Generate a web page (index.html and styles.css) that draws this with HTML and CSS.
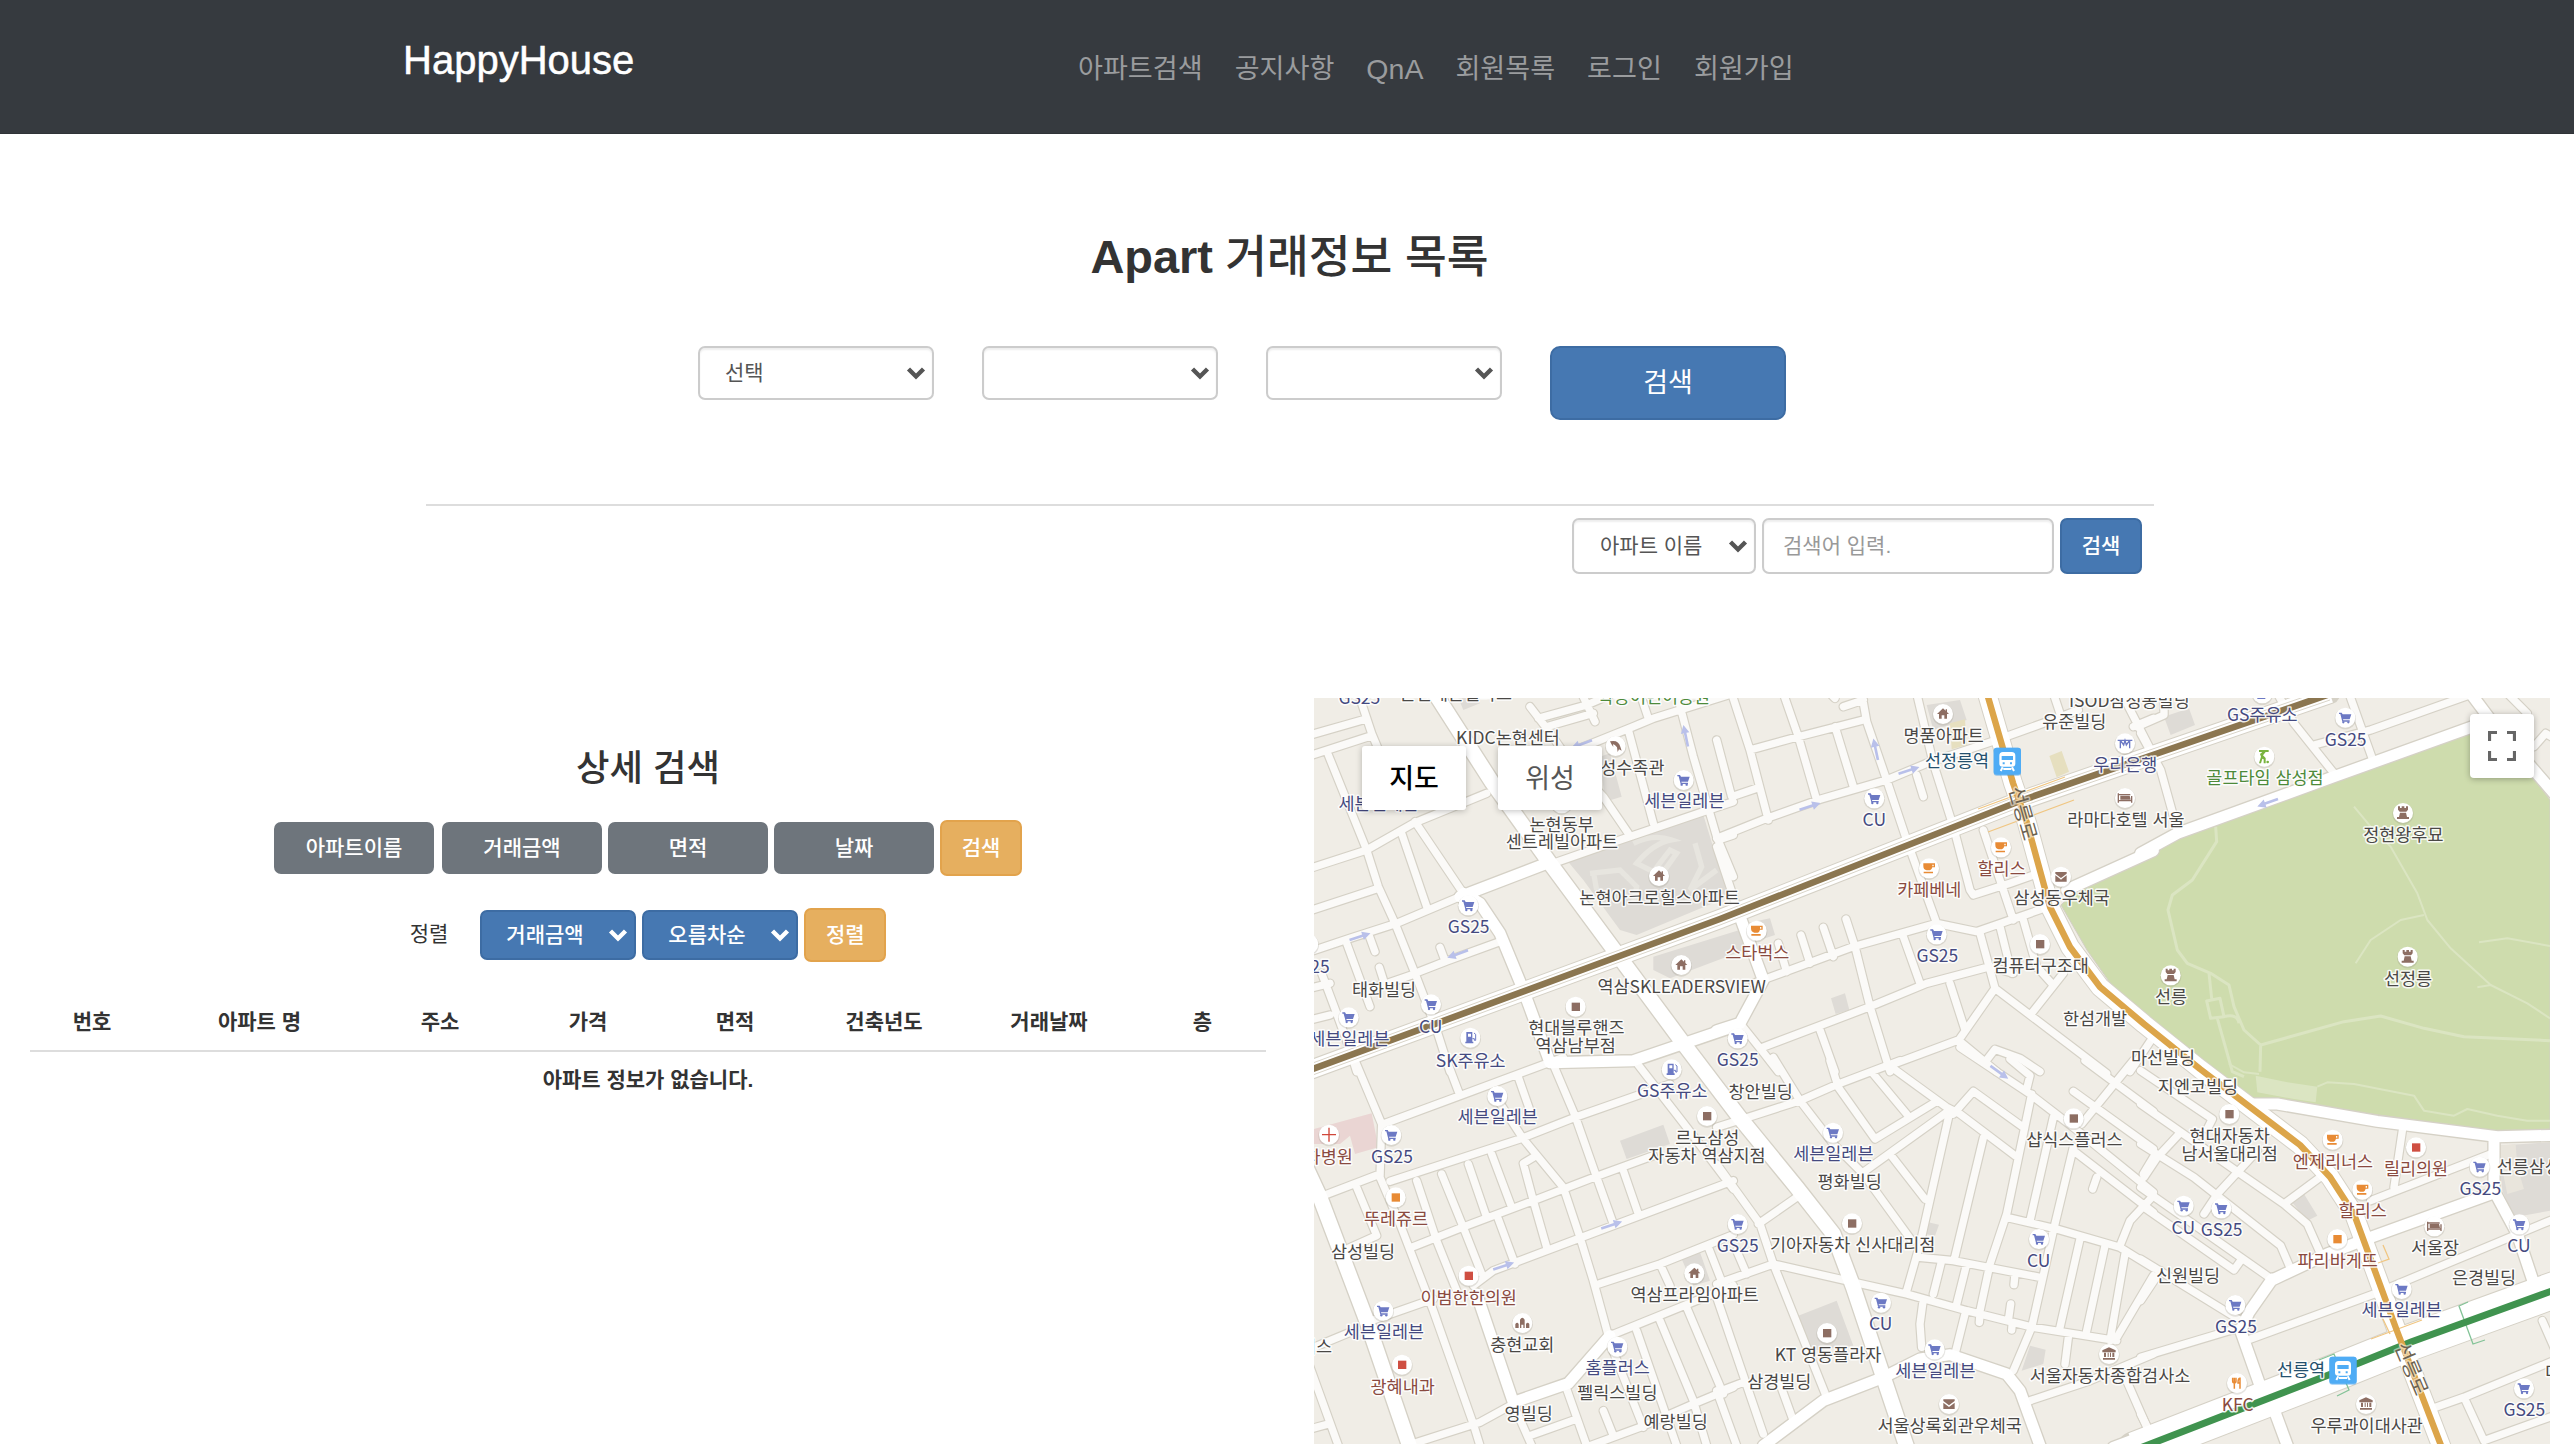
FILE: index.html
```html
<!DOCTYPE html>
<html lang="ko">
<head>
<meta charset="utf-8">
<title>HappyHouse</title>
<link rel="stylesheet" href="styles.css">
</head>
<body>
<svg class="defs" width="0" height="0" aria-hidden="true">
  <symbol id="chevron" viewBox="0 0 20 14"><path d="M2.5 3 L10 10.5 L17.5 3" fill="none" stroke="currentColor" stroke-width="4.4"/></symbol>
</svg>

<header class="topbar">
  <a class="brand">HappyHouse</a>
  <nav class="menu"><a>아파트검색</a><a>공지사항</a><a class="latin">QnA</a><a>회원목록</a><a>로그인</a><a>회원가입</a></nav>
</header>

<section class="search">
  <h1 class="title"><span class="latin">Apart</span> 거래정보 목록</h1>
  <div class="region">
    <div class="picker"><span>선택</span><svg class="chev"><use href="#chevron"/></svg></div>
    <div class="picker"><span></span><svg class="chev"><use href="#chevron"/></svg></div>
    <div class="picker"><span></span><svg class="chev"><use href="#chevron"/></svg></div>
    <button class="btn primary large">검색</button>
  </div>
  <div class="keyword">
    <div class="picker"><span>아파트 이름</span><svg class="chev"><use href="#chevron"/></svg></div>
    <input class="field" placeholder="검색어 입력.">
    <button class="btn primary">검색</button>
  </div>
</section>

<main class="content">
  <section class="list">
    <h2 class="subtitle">상세 검색</h2>
    <div class="filters">
      <button class="btn gray">아파트이름</button><button class="btn gray">거래금액</button><button class="btn gray">면적</button><button class="btn gray">날짜</button><button class="btn warn">검색</button>
    </div>
    <div class="sorting">
      <span class="sort-label">정렬</span>
      <div class="picker blue"><span>거래금액</span><svg class="chev"><use href="#chevron"/></svg></div>
      <div class="picker blue"><span>오름차순</span><svg class="chev"><use href="#chevron"/></svg></div>
      <button class="btn warn">정렬</button>
    </div>
    <table class="deals">
      <colgroup><col class="c1"><col class="c2"><col class="c3"><col class="c4"><col class="c5"><col class="c6"><col class="c7"><col class="c8"></colgroup>
      <thead><tr><th>번호</th><th>아파트 명</th><th>주소</th><th>가격</th><th>면적</th><th>건축년도</th><th>거래날짜</th><th>층</th></tr></thead>
      <tbody><tr><td colspan="8">아파트 정보가 없습니다.</td></tr></tbody>
    </table>
  </section>

  <section class="map">
    <svg class="canvas" viewBox="1314 698 1236 746">
      <defs>
        <g id="dot"><circle r="32" fill="#8a8478" opacity=".22" cy="3"/><circle r="30" fill="#fff"/></g>
        <g id="cart"><use href="#dot"/><path d="M-19 -15 H-11 L-8 -10 H18 L13 5 H-7 L-6 8 H13 V12 H-9 L-15 -11 H-19Z" fill="#6c79c4"/><circle cx="-6" cy="14" r="3.5" fill="#6c79c4"/><circle cx="9" cy="14" r="3.5" fill="#6c79c4"/></g>
        <g id="home"><use href="#dot"/><path d="M0 -17 L8 -10 V-14 H12 V-6 L18 0 H12 V14 H4 V4 H-4 V14 H-12 V0 H-18Z" fill="#8d6e63"/></g>
        <g id="shop"><use href="#dot"/><rect x="-12" y="-12" width="25" height="25" fill="#8d6e63"/></g>
        <g id="bakery"><use href="#dot"/><rect x="-12" y="-12" width="25" height="25" fill="#e88b35"/></g>
        <g id="clinic"><use href="#dot"/><rect x="-12" y="-12" width="25" height="25" fill="#cf4f42"/></g>
        <g id="cup"><use href="#dot"/><path d="M-17 -15 H18 V-3 H10 Q8 5 3 6 H-7 Q-17 4 -17 -7Z M10 -11 V-6 H14 V-11Z M-16 10 H12 V15 H-16Z" fill="#e88b35" fill-rule="evenodd"/></g>
        <g id="fuel"><use href="#dot"/><path d="M-12 -17 H6 V12 H9 V17 H-15 V12 H-12Z M-7 -12 V-3 H2 V-12Z" fill="#6c79c4" fill-rule="evenodd"/><path d="M6 3 H12 V8 H16 V-10 L11 -14" fill="none" stroke="#6c79c4" stroke-width="3"/></g>
        <g id="tower"><use href="#dot"/><path d="M-15 -20 H-9 V-15 H-4 V-20 H4 V-15 H9 V-20 H15 V-10 L10 -4 H-10 L-15 -10Z M-9 -1 H9 L12 12 H18 V18 H-18 V12 H-12Z" fill="#8d6e63"/></g>
        <g id="mail"><use href="#dot"/><path d="M-17 -14 H17 V-9 L0 4 L-17 -9Z M-17 -4 L-5 5 L0 9 L5 5 L17 -4 V15 H-17Z" fill="#8d6e63"/></g>
        <g id="bed"><use href="#dot"/><path d="M-20 -14 V14 M20 -6 V14 M-20 8 H20 M-20 -10 H16" stroke="#8d6e63" stroke-width="4" fill="none"/><path d="M-14 -7 H14 L17 5 H-14Z" fill="#8d6e63"/></g>
        <g id="hall"><use href="#dot"/><path d="M0 -20 L20 -11 V-5 H-20 V-11Z M-15 -4 H-9 V9 H-15Z M-4 -4 H-1 V9 H-4Z M3 -4 H6 V9 H3Z M10 -4 H16 V9 H10Z M-18 12 H18 V17 H-18Z" fill="#8d6e63"/></g>
        <g id="bank"><use href="#dot"/><path d="M-22 -9 H22 M-14 15 V-9 M14 15 V-9 M-14 -9 L-4 5 L0 -9 L4 5 L14 -9" fill="none" stroke="#6c79c4" stroke-width="4"/></g>
        <g id="cross"><use href="#dot"/><path d="M0 -21 V21 M-21 0 H21" stroke="#d0473a" stroke-width="4"/></g>
        <g id="church"><use href="#dot"/><path d="M-7 15 V-10 Q0 -22 7 -10 V15 H3 V5 H-3 V15Z M-21 15 V3 Q-15 -4 -11 3 V15Z M11 15 V3 Q16 -4 21 3 V15Z" fill="#8d6e63"/></g>
        <g id="fork"><use href="#dot"/><path d="M-13 -16 V-6 Q-13 0 -8 0 Q-3 0 -3 -6 V-16 M-8 -16 V17 M9 17 V-14 Q3 -14 3 0 H9" fill="none" stroke="#e88b35" stroke-width="4.5"/></g>
        <g id="golf"><use href="#dot"/><path d="M-16 -20 H13 V-14 H4 L-4 -4 L4 4 V20 H-2 V8 L-6 6 L-10 20 H-16 L-10 0 L-13 -8 L-6 -14 H-16Z" fill="#79b33f"/><circle cx="10" cy="16" r="4" fill="#79b33f"/></g>
        <g id="dolphin"><use href="#dot"/><path d="M-17 -14 Q8 -20 14 2 L18 14 L10 10 L6 18 L4 4 Q-4 -6 -8 -5 L-7 3 L-13 -6Z" fill="#8d6e63"/></g>
        <g id="metro"><rect x="-41" y="-41" width="82" height="84" rx="9" fill="#3597e8" opacity=".5"/><rect x="-41" y="-41" width="82" height="81" rx="9" fill="#4facf5"/><path d="M-13 -28 H13 Q24 -28 24 -17 V7 Q24 16 14 16 H-14 Q-24 16 -24 7 V-17 Q-24 -28 -13 -28Z M-17 -16 V-4 H17 V-16Z M-14 3 V9 H-8 V3Z M8 3 V9 H14 V3Z" fill="#fff" fill-rule="evenodd"/><path d="M-14 18 L-20 29 M14 18 L20 29 M-12 23 H12" stroke="#fff" stroke-width="6"/></g>
        <path id="way" d="M-33 -4 H8 V-13 L33 0 L8 13 V4 H-33Z" fill="#b9c0ea"/>

        <g id="lanes" fill="none" stroke-linejoin="round">
          <path transform="translate(1300 690) scale(.33333)" d="M85 195 L200 480 L235 590 L285 700 L345 850 L410 1020 L450 1145 M175 10 L215 130 L240 190 M30 135 L195 88 M30 197 L215 137 M30 535 L200 480 L340 400 L560 310 M30 662 L235 595 M305 430 L380 650 M345 395 L490 610 M30 785 L150 745 L290 700 L480 620 M760 520 L960 450 L1210 365 L1300 335 M345 850 L440 813 L600 755 M420 772 L435 812 M140 760 L210 950 M205 730 L225 785 M238 832 L255 885 M190 905 L350 850 M30 990 L90 975 M30 895 L90 880 M65 850 L110 970 L150 1080 L170 1145 M690 50 L740 115 L800 200 L910 320 L985 430 M845 10 L885 95 M715 85 L860 45 L930 15 M740 110 L880 70 M790 195 L1000 110 L1060 85 L1300 10 M985 120 L1060 400 M1020 10 L1045 85 M1130 10 L1180 200 L1250 440 L1300 560 M1255 450 L1300 435"/>
          <path transform="translate(1720 690) scale(.33333)" d="M35 10 L90 180 L145 390 M-10 150 L35 320 L110 295 M190 10 L235 140 L290 330 M90 180 L235 140 L430 90 M345 110 L400 290 M-10 445 L140 385 L300 328 L500 270 L620 220 L830 150 L1010 85 L1075 60 M425 10 L440 95 L500 270 L560 450 L650 700 M370 50 L430 30 M330 10 L345 25 M590 10 L640 220 L700 410 L750 600 L760 615 L870 580 L970 545 M590 255 L610 320 M790 420 L850 600 L880 690 M100 880 L400 770 L650 700 L770 725 L900 680 L1000 645 M175 760 L200 845 M243 735 L270 820 M310 712 L340 800 M378 687 L405 770 L450 950 L510 1145 M-10 470 L60 680 M60 1000 L120 1075 L175 1145 M120 1075 L450 950 L620 880 L810 830 L880 850 M550 740 L600 880 M780 730 L825 895 L720 1045 M690 880 L735 1020 M300 1020 L345 1145 M500 1130 L715 1050 L830 1145 M825 895 L1160 1150 M840 710 L875 850 M910 690 L950 830 L995 880 M935 970 L1030 850 M800 1110 L825 1078 L900 1105 L960 1145 M1300 1040 L1230 1145 M1000 10 L1020 70 M1205 10 L1300 195 M1240 110 L1300 85"/>
          <path transform="translate(2144 690) scale(.33333)" d="M-20 110 L60 75 L60 20 M-10 130 L50 240 L100 420 M400 10 L450 100 L570 250 M615 10 L690 220 M510 165 L680 120 L990 10 M1090 10 L1150 70 M1170 170 L1205 130 L1230 145"/>
          <path transform="translate(1300 1064) scale(.33333)" d="M165 -10 L245 180 L240 340 L300 480 L400 740 L520 1080 L540 1145 M250 180 L480 95 L790 -20 M440 -10 L480 95 M755 -10 L825 155 L890 340 L940 480 M655 40 L690 140 M595 110 L670 225 L790 370 M270 352 L660 225 L825 160 L1110 60 M340 548 L500 485 L700 410 L890 337 L1060 275 M520 665 L580 620 L840 522 L1300 350 M350 350 L410 530 L470 680 M425 330 L490 490 L545 630 M505 300 L560 460 M575 270 L635 430 M595 465 L645 600 M700 280 L670 298 L700 410 L740 550 M790 370 L840 520 L880 650 L925 815 M970 320 L1015 450 M70 395 L240 330 M170 370 L230 515 L130 560 M30 855 L150 805 M215 770 L400 705 M30 910 L115 1145 M30 1095 L85 1080 M320 1145 L540 1075 L640 1020 L695 1145 M690 1115 L830 1065 M800 975 L860 1145 M890 662 L1080 600 L1230 540 L1300 512 M930 815 L1300 665 M1080 600 L1110 665 M1225 550 L1270 665 M1010 800 L1130 1145 M1080 770 L1180 1010 L1220 1145 M1160 730 L1270 990 M935 850 L1030 1090 M910 1040 L940 1115 M870 1145 L1020 1090 L1180 1020 L1300 970 M1005 -10 L1160 190 L1300 375"/>
          <path transform="translate(1720 1064) scale(.33333)" d="M-10 190 L100 155 L240 110 L350 62 L540 -10 M160 -20 L240 110 L340 240 L430 330 L575 530 M330 -10 L355 70 L465 225 L650 112 M460 30 L560 150 M515 10 L680 130 L720 150 L885 275 M430 325 L680 145 M510 270 L615 405 M690 140 L600 540 L560 680 M790 222 L703 585 M700 150 L760 82 L910 190 M935 90 L860 450 L810 600 L780 740 M720 -50 L930 90 L1060 190 L1300 385 M920 75 L930 35 L870 -15 M1000 160 L930 470 M1060 250 L1000 500 L935 790 L880 920 M860 460 L1010 495 L1200 550 L1300 612 M160 600 L380 650 L560 690 L740 740 L940 790 L1190 830 M600 580 L700 590 L960 640 M665 590 L640 690 M740 600 L710 720 M735 750 L705 870 M608 720 L600 780 L605 850 M885 630 L882 662 M872 720 L865 770 M877 775 L875 798 M780 750 L778 775 M1080 525 L1020 790 M1155 545 L1100 800 M1215 570 L1170 830 M1300 635 L1185 830 M1045 820 L1035 900 M1060 82 L1300 255 M1085 180 L1240 -10 M1095 -10 L1300 142 M1060 260 L1300 445 M1130 340 L1118 375 M1300 395 L1230 470 L1200 545 M115 480 L230 400 M-10 300 L120 480 L160 600 L320 1000 M-10 660 L160 600 M50 560 L80 630 M-10 700 L130 1110 M-10 985 L70 955 M180 960 L220 1070 M-10 980 L50 1145 M930 1010 L1110 950 L1300 870 M1220 950 L1290 1110 M1270 330 L1300 280"/>
          <path transform="translate(2144 1064) scale(.33333)" d="M-10 20 L205 165 L190 195 M-10 120 L290 330 L420 420 L490 480 L530 570 M-10 240 L150 340 L410 545 L440 615 M110 205 L40 280 L0 340 M340 260 L220 390 L180 450 M-10 370 L390 650 M0 430 L270 618 L290 590 M420 420 L535 335 M-10 585 L290 770 M-10 880 L290 790 M320 825 L690 690 L1230 465 M50 620 L-10 710 M775 200 L750 370 M680 410 L1040 270 M860 1035 L960 1000 L1230 890 M960 1000 L1020 1130 L1230 1055 M1195 770 L1230 850 M-10 1050 L30 1130"/>
        </g>
        <g id="avenues" fill="none" stroke-linejoin="round">
          <path transform="translate(1300 690) scale(.33333)" d="M480 620 L740 520 M490 610 L540 640 L600 730 L670 900 L750 1118 L1000 1112 L1300 1010"/>
          <path transform="translate(1720 690) scale(.33333)" d="M60 680 L130 870 L60 1000 L-10 1022 M1040 600 L1300 482"/>
          <path transform="translate(2144 690) scale(.33333)" d="M-10 490 L100 430 L570 260 L1000 105 M980 10 L1040 90 L1230 310"/>
          <path transform="translate(1300 1064) scale(.33333)" d="M530 690 L640 1015 L805 958 L930 815"/>
          <path transform="translate(1720 1064) scale(.33333)" d="M130 1145 L310 1010 L490 940 L600 885 L690 872 L860 930 L900 980 L960 1145 M1300 1105 L1180 1150"/>
          <path transform="translate(2144 1064) scale(.33333)" d="M330 120 L400 120 L700 172 L1060 218 L1230 214 M380 650 L550 570 L680 520 L1040 390 M385 645 L315 745 L290 800 L350 970 M1050 225 L1050 380 L1120 510 L1170 660 M395 1050 L430 1145"/>
        </g>
        <g id="trunks" fill="none" stroke-linejoin="round">
          <path transform="translate(1300 690) scale(.33333)" d="M405 10 L575 275 L750 520 L950 790 L1150 1060 L1320 1284 L1490 1492 L1600 1632 L1660 1792 L1820 2270"/>
          <path transform="translate(1300 1064) scale(.33333)" d="M-5 260 L60 400 L200 770 L330 1150"/>
        </g>
        <path id="subway" fill="none" d="M1310 1070 L1720 919 L2020 801 L2144 758 L2330 694"/>
        <path id="seolleung" fill="none" stroke-linejoin="round" d="M1986 690 L2013 783 L2027 823 L2050 907 L2070 947 L2100 987 L2144 1024 L2200 1069 L2300 1145 L2330 1177 L2354 1214 L2397 1331 L2442 1448"/>
        <path id="teheran" fill="none" d="M2135 1450 L2344 1369 L2411 1342 L2560 1288"/>
      </defs>

      <rect x="1314" y="698" width="1236" height="746" fill="#f0ede6"/>
      <g fill="#dedbd6">
        <path transform="translate(1300 690) scale(.33333)" d="M800 510 L960 460 L1210 375 L1285 620 L1010 735 L960 720 L850 570Z M1060 800 L1350 710 L1360 770 L1110 865 L1060 840Z M475 24 H530 L540 40 L490 60Z M900 200 L930 190 L965 320 L915 335Z"/>
        <path transform="translate(1720 690) scale(.33333)" d="M620 45 L720 30 L740 90 L640 120Z M333 925 L375 910 L388 960 L347 972Z M80 700 L150 685 L165 735 L90 760Z"/>
        <path transform="translate(2144 690) scale(.33333)" d="M60 80 L135 55 L153 105 L80 135Z"/>
        <path transform="translate(1300 1064) scale(.33333)" d="M960 230 L1090 182 L1110 240 L980 285Z M1145 585 L1200 565 L1230 650 L1180 665Z"/>
        <path transform="translate(1720 1064) scale(.33333)" d="M235 755 L350 710 L400 845 L270 860Z M625 475 L657 482 L645 515 L612 510Z M930 845 L977 857 L970 900 L905 920Z"/>
        <path transform="translate(2144 1064) scale(.33333)" d="M1060 245 L1220 235 V440 L1110 460 L1075 380Z M440 410 L480 390 L520 455 L490 470Z"/>
      </g>
      <path transform="translate(1300 690) scale(.33333)" d="M1000 460 Q1060 430 1115 450 Q1060 460 1010 520 L1060 545 L1110 480 L1130 490 L1080 560 M870 550 L960 540 L1010 590 L1000 640 M880 545 L890 600 M1185 460 L1205 530 L1170 600 L1250 540" fill="none" stroke="#e7e5df" stroke-width="16"/>
      <path transform="translate(1720 690) scale(.33333)" d="M690 100 L735 88 L740 165 L695 178Z M988 198 L1025 183 L1047 245 L1010 262Z" fill="#e6dfbf"/>
      <path transform="translate(1300 1064) scale(.33333)" d="M42 195 L215 148 L235 250 L165 270 L150 215 L120 240 L42 240Z" fill="#ead5d3"/>
      <path transform="translate(2144 1064) scale(.33333)" d="M1060 245 L1115 240 L1120 310 L1140 375 L1090 390Z" fill="#e9e5dc"/>
      <path fill="#cedcad" stroke="#d3cfc4" stroke-width="1" d="M2061 905 L2077 890 L2144 856 L2181 837 L2337 780 L2471 731 L2490 720 L2550 800 V1130 L2497 1132 L2394 1117 L2317 1107 L2274 1100 L2251 1099 L2207 1064 L2144 1013 L2113 987 L2087 950Z"/>
      <g fill="none" stroke="#dbe5c2" stroke-width="9" stroke-linejoin="round">
        <path transform="translate(2144 690) scale(.33333)" d="M215 410 L218 455 L145 570 L85 615 L72 660 L100 780 L130 820 L200 850 L255 885 L270 950 L300 1020 L350 1065 L600 995 L710 978 L840 1015 L960 1040 L1218 1052 M350 1065 L348 1145 M220 985 L265 1145 L300 1160 M195 850 L203 925 M188 933 L228 925 L240 980 L200 985Z M240 980 Q280 970 285 1000"/>
        <path stroke-width="6" transform="translate(2144 690) scale(.33333)" d="M630 350 L680 410 L740 470 L820 610 L850 690 L920 775 L1040 885 L1150 940 L1218 985 M840 675 L770 690 L680 750 L635 820 M1005 757 L1090 745 L1218 768 M1000 892 L1040 885"/>
        <path stroke-width="6" transform="translate(2144 1064) scale(.33333)" d="M255 0 L300 25 L345 30 M520 68 L550 55 L630 60 L810 95 L840 140 L930 155 L970 135 L1060 155 L1150 170 L1218 170"/>
      </g>
      <path transform="translate(2144 1064) scale(.33333)" d="M335 35 L430 55 L520 68 L515 115 L450 105 L340 85Z" fill="#dbe5c2"/>

      <g stroke="#d5d1c6" stroke-linecap="round">
        <use href="#lanes" stroke-width="29"/><use href="#avenues" stroke-width="41"/><use href="#trunks" stroke-width="52"/>
        <use href="#subway" stroke-width="20"/><use href="#seolleung" stroke-width="20"/><use href="#teheran" stroke-width="38"/>
      </g>
      <use href="#lanes" stroke="#fbfaf8" stroke-width="22" stroke-linecap="round"/>
      <g stroke="#fff" stroke-linecap="round"><use href="#avenues" stroke-width="33"/><use href="#trunks" stroke-width="44"/></g>
      <g stroke="#fff"><use href="#subway" stroke-width="18"/><use href="#teheran" stroke-width="36"/><use href="#seolleung" stroke-width="18"/></g>
      <g fill="none" stroke="#d9d4c8" stroke-width="1"><path transform="translate(0 -6)" d="M1310 1070 L1720 919 L2020 801 L2144 758 L2330 694"/><path transform="translate(0 6)" d="M1310 1070 L1720 919 L2020 801 L2144 758 L2330 694"/></g>
      <g fill="none" stroke="#f0c682" stroke-width="1.3">
        <path d="M1978 809 L2065 777 M1988 832 L2074 800 M2383 1245 L2389 1259 L2378 1263 M2371 1339 L2422 1320 M2382 1317 L2390 1334"/>
        <path stroke="#83c397" d="M2468 1302 L2459 1306 L2473 1344 L2485 1340 M2319 1360 L2334 1354 L2349 1390 L2337 1396"/>
      </g>
      <use href="#subway" stroke="#8b7650" stroke-width="6.6"/>
      <use href="#teheran" stroke="#40934f" stroke-width="7"/>
      <use href="#seolleung" stroke="#dca54a" stroke-width="6.4"/>

      <!-- north-west -->
      <g class="labels" transform="translate(1300 690) scale(.33333)">
        <use href="#way" transform="translate(180 740) rotate(-18)"/><use href="#way" transform="translate(473 792) rotate(160)"/><use href="#way" transform="translate(845 162) rotate(160)"/><use href="#way" transform="translate(1157 137) rotate(-102)"/>
        <use href="#dolphin" x="947" y="168"/><use href="#cart" x="1151" y="270"/><use href="#dot" x="785" y="340"/><use href="#home" x="1077" y="558"/><use href="#cart" x="505" y="646"/><use href="#home" x="1144" y="825"/><use href="#cart" x="393" y="943"/><use href="#cart" x="146" y="982"/><use href="#dot" x="25" y="762"/><use href="#shop" x="827" y="950"/><use href="#fuel" x="511" y="1043"/><use href="#fuel" x="1115" y="1138"/>
        <text class="store" x="178" y="42">GS25</text><text x="468" y="30">논현해븐빌파크</text><text class="green" x="1062" y="38">학동어린이공원</text>
        <text x="624" y="162">KIDC논현센터</text><text x="973" y="252">삼성수족관</text><text class="store" x="236" y="360">세븐일레븐</text><text class="store" x="1153" y="352">세븐일레븐</text>
        <text x="785" y="422">논현동부</text><text x="786" y="474">센트레빌아파트</text><text x="1079" y="641">논현아크로힐스아파트</text><text class="store" x="506" y="730">GS25</text><text class="store" x="26" y="848">GS25</text>
        <text x="252" y="918">태화빌딩</text><text x="1145" y="908">역삼SKLEADERSVIEW</text><text class="store" x="392" y="1028">CU</text><text class="store" x="148" y="1066">세븐일레븐</text><text x="829" y="1032">현대블루핸즈</text><text x="827" y="1086">역삼남부점</text><text class="store" x="512" y="1130">SK주유소</text>
      </g>
      <!-- north -->
      <g class="labels" transform="translate(1720 690) scale(.33333)">
        <use href="#way" transform="translate(270 349) rotate(-18)"/><use href="#way" transform="translate(567 241) rotate(-18)"/><use href="#way" transform="translate(467 178) rotate(-102)"/>
        <use href="#home" x="669" y="72"/><use href="#bank" x="1215" y="160"/><use href="#bed" x="1215" y="324"/><use href="#cart" x="463" y="325"/><use href="#cup" x="843" y="472"/><use href="#cup" x="627" y="535"/><use href="#mail" x="1023" y="560"/><use href="#cup" x="110" y="722"/><use href="#cart" x="650" y="733"/><use href="#shop" x="960" y="762"/><use href="#cart" x="53" y="1045"/>
        <text class="road" transform="translate(908 370) rotate(74)" x="0" y="20">선릉로</text>
        <use href="#metro" x="862" y="214"/>
        <text x="1228" y="52">ISOD삼성동빌딩</text><text x="1063" y="114">유준빌딩</text><text x="671" y="156">명품아파트</text><text class="station" x="711" y="232">선정릉역</text><text class="store" x="1216" y="244">우리은행</text><text class="store" x="463" y="408">CU</text><text x="1218" y="408">라마다호텔 서울</text>
        <text class="food" x="845" y="556">할리스</text><text class="food" x="628" y="619">카페베네</text><text x="1025" y="643">삼성동우체국</text><text class="food" x="112" y="807">스타벅스</text><text class="store" x="652" y="817">GS25</text><text x="962" y="847">컴퓨터구조대</text><text x="1125" y="1005">한섬개발</text><text class="store" x="53" y="1128">GS25</text>
      </g>
      <!-- north-east -->
      <g class="labels" transform="translate(2144 690) scale(.33333)">
        <use href="#way" transform="translate(371 338) rotate(160)"/>
        <use href="#fuel" x="355" y="10"/><use href="#cart" x="604" y="83"/><use href="#golf" x="361" y="200"/><use href="#tower" x="777" y="369"/><use href="#tower" x="791" y="800"/><use href="#tower" x="80" y="856"/>
        <text class="store" x="355" y="94">GS주유소</text><text class="store" x="605" y="167">GS25</text><text class="green" x="363" y="283">골프타임 삼성점</text><text x="778" y="453">정현왕후묘</text><text x="792" y="885">선정릉</text><text x="81" y="940">선릉</text><text x="57" y="1123">마선빌딩</text>
      </g>
      <!-- south-west -->
      <g class="labels" transform="translate(1300 1064) scale(.33333)">
        <use href="#way" transform="translate(935 483) rotate(-18)"/><use href="#way" transform="translate(611 606) rotate(-18)"/>
        <use href="#cart" x="592" y="96"/><use href="#shop" x="1221" y="156"/><use href="#cross" x="87" y="212"/><use href="#cart" x="274" y="213"/><use href="#bakery" x="287" y="400"/><use href="#clinic" x="506" y="635"/><use href="#home" x="1183" y="628"/><use href="#cart" x="250" y="740"/><use href="#church" x="667" y="777"/><use href="#cart" x="952" y="848"/><use href="#clinic" x="306" y="902"/>
        <text class="store" x="593" y="178">세븐일레븐</text><text class="store" x="1117" y="100">GS주유소</text><text x="1222" y="240">르노삼성</text><text x="1221" y="294">자동차 역삼지점</text><text class="food" x="86" y="297">차병원</text><text class="store" x="276" y="298">GS25</text><text class="food" x="288" y="483">뚜레쥬르</text><text x="189" y="583">삼성빌딩</text><text class="food" x="506" y="719">이범한한의원</text><text x="1184" y="711">역삼프라임아파트</text><text class="store" x="252" y="823">세븐일레븐</text><text x="24" y="867">오피스</text><text x="667" y="862">충현교회</text><text class="store" x="953" y="931">홈플러스</text><text class="food" x="308" y="986">광혜내과</text><text x="952" y="1004">펠릭스빌딩</text><text x="686" y="1067">영빌딩</text><text x="1127" y="1091">예랑빌딩</text>
      </g>
      <!-- south -->
      <g class="labels" transform="translate(1720 1064) scale(.33333)">
        <use href="#way" transform="translate(838 25) rotate(36)"/>
        <use href="#shop" x="1061" y="163"/><use href="#cart" x="339" y="206"/><use href="#shop" x="396" y="478"/><use href="#cart" x="53" y="480"/><use href="#cart" x="957" y="525"/><use href="#cart" x="483" y="716"/><use href="#shop" x="321" y="807"/><use href="#cart" x="644" y="856"/><use href="#hall" x="1167" y="870"/><use href="#mail" x="687" y="1020"/>
        <text x="122" y="103">창안빌딩</text><text x="1063" y="247">샵식스플러스</text><text class="store" x="340" y="289">세븐일레븐</text><text x="389" y="372">평화빌딩</text><text x="398" y="562">기아자동차 신사대리점</text><text class="store" x="53" y="564">GS25</text><text class="store" x="956" y="609">CU</text><text class="store" x="482" y="799">CU</text><text x="324" y="892">KT 영동플라자</text><text class="store" x="646" y="939">세븐일레븐</text><text x="178" y="973">삼경빌딩</text><text x="1170" y="955">서울자동차종합검사소</text><text x="689" y="1103">서울상록회관우체국</text>
      </g>
      <!-- south-east -->
      <g class="labels" transform="translate(2144 1064) scale(.33333)">
        <text class="road" transform="translate(802 915) rotate(67)" x="0" y="20">선릉로</text>
        <use href="#shop" x="256" y="150"/><use href="#cup" x="566" y="227"/><use href="#clinic" x="816" y="250"/><use href="#cart" x="1007" y="308"/><use href="#cup" x="655" y="377"/><use href="#cart" x="119" y="425"/><use href="#cart" x="232" y="433"/><use href="#cart" x="1126" y="481"/><use href="#bed" x="871" y="487"/><use href="#bakery" x="580" y="525"/><use href="#cart" x="773" y="675"/><use href="#cart" x="274" y="723"/><use href="#fork" x="279" y="957"/><use href="#cart" x="1140" y="973"/><use href="#hall" x="666" y="1020"/><use href="#metro" x="597" y="919"/>
        <text x="162" y="87">지엔코빌딩</text><text x="257" y="234">현대자동차</text><text x="257" y="287">남서울대리점</text><text class="food" x="567" y="311">엔제리너스</text><text class="food" x="816" y="334">릴리의원</text><text class="start" x="1058" y="327">선릉삼성아파트</text><text class="store" x="1009" y="392">GS25</text><text class="food" x="656" y="460">할리스</text><text class="store" x="118" y="509">CU</text><text class="store" x="233" y="516">GS25</text><text x="873" y="570">서울장</text><text class="store" x="1125" y="564">CU</text><text class="food" x="581" y="608">파리바게뜨</text><text x="132" y="653">신원빌딩</text><text x="1020" y="660">은경빌딩</text><text class="store" x="773" y="757">세븐일레븐</text><text class="store" x="276" y="807">GS25</text><text class="station" x="471" y="935">선릉역</text><text class="food" x="281" y="1041">KFC</text><text class="store" x="1141" y="1056">GS25</text><text x="668" y="1103">우루과이대사관</text><text class="start" x="1204" y="943">대</text>
      </g>
    </svg>
    <div class="types"><button class="type active">지도</button><button class="type">위성</button></div>
    <button class="full" aria-label="전체화면"><svg viewBox="0 0 28 30"><path d="M1.5 10 V1.5 H9 M19 1.5 H26.5 V10 M26.5 20 V28.5 H19 M9 28.5 H1.5 V20" fill="none" stroke="#666" stroke-width="3.2"/></svg></button>
  </section>
</main>
</body>
</html>
```

FILE: styles.css
```css
* { box-sizing: border-box; }
html, body { height: 100%; }
body {
  margin: 0;
  overflow: hidden;
  background: #fff;
  color: #333;
  font: 21px/28px "Liberation Sans", "Noto Sans CJK KR", sans-serif;
  display: flex;
  flex-direction: column;
}
.defs { display: none; }

.topbar {
  flex: none;
  height: 134px;
  padding: 0 403px;
  background: #363a3f;
  border-bottom: 1px solid #2f3337;
  display: flex;
  align-items: flex-start;
}
.brand { width: 675px; padding-top: 35px; font-size: 40px; line-height: 50px; color: #fff; -webkit-text-stroke: .5px #fff; }
.menu { display: flex; gap: 32px; padding-top: 49px; font-size: 27.1px; line-height: 40px; color: #9a9c9e; white-space: nowrap; }
.menu .latin { font-size: 28.5px; }

.search { flex: none; height: 564px; display: flex; flex-direction: column; align-items: center; }
.title { margin: 93px 0 0 5px; font-size: 45.4px; line-height: 60px; font-weight: 500; }
.title .latin { font-size: 47px; font-weight: 700; letter-spacing: -.1px; }
.region { margin-top: 58px; margin-right: 90px; height: 74px; display: flex; gap: 48px; align-items: flex-start; }
.region .picker { width: 236px; height: 54px; padding-left: 25px; }

.picker {
  display: flex;
  align-items: center;
  justify-content: space-between;
  padding: 0 6px 0 26px;
  border: 2px solid #ccc;
  border-radius: 7px;
  background: #fff;
  color: #555;
  box-shadow: inset 0 2px 2px rgba(0, 0, 0, .07);
}
.chev { width: 20px; height: 14px; flex: none; }

.btn {
  height: 56px;
  width: 82px;
  padding: 0;
  border: 2px solid;
  border-radius: 7px;
  color: #fff;
  font: inherit;
  font-weight: 500;
}
.primary { background: #4678b2; border-color: #3d6ca3; }
.large { width: 236px; height: 74px; border-radius: 10px; font-size: 27px; font-weight: 400; }
.gray { width: 160px; height: 52px; background: #6e757c; border-color: #6e757c; }
.warn { background: #e6af5f; border-color: #e2a34c; }

.keyword {
  width: 1728px;
  margin: 84px 0 0 6px;
  padding: 12px 12px 0 0;
  border-top: 2px solid #ddd;
  display: flex;
  justify-content: flex-end;
  gap: 6px;
}
.keyword .picker { width: 184px; height: 56px; }
.field {
  width: 292px;
  height: 56px;
  padding: 0 19px;
  border: 2px solid #ccc;
  border-radius: 7px;
  font: inherit;
  box-shadow: inset 0 2px 2px rgba(0, 0, 0, .07);
}
.field::placeholder { color: #999; opacity: 1; }

.content { flex: 1; min-height: 0; display: flex; padding: 0 24px 0 30px; gap: 48px; }
.list { width: 1236px; display: flex; flex-direction: column; align-items: center; }
.subtitle { margin: 48px 0 0; font-size: 36.4px; line-height: 46px; font-weight: 500; }
.filters { display: flex; align-items: center; gap: 6px; margin-top: 28px; }
.filters .gray:first-child { margin-right: 2px; }
.sorting { display: flex; align-items: center; gap: 6px; margin-top: 32px; }
.sort-label { margin-right: 26px; padding-bottom: 3px; }
.sorting .btn { height: 54px; }
.picker.blue { width: 156px; height: 50px; padding: 0 6px 0 24px; background: #4678b2; border-color: #3d6ca3; color: #fff; box-shadow: none; font-weight: 500; }

.deals { width: 1236px; margin-top: 28px; border-collapse: collapse; table-layout: fixed; text-align: center; font-weight: 700; }
.deals th { height: 61px; padding: 3px 0 0; border-bottom: 2px solid #ddd; }
.deals td { height: 57px; padding: 0; }
.c1 { width: 124px; }
.c2 { width: 211px; }
.c3 { width: 150px; }
.c4 { width: 146px; }
.c5 { width: 148px; }
.c6 { width: 150px; }
.c7 { width: 180px; }
.c8 { width: 127px; }

.map { position: relative; width: 1236px; height: 746px; overflow: hidden; }
.canvas { display: block; width: 1236px; height: 746px; }
.labels text {
  font-family: "Noto Sans CJK KR", sans-serif;
  font-size: 52.4px;
  text-anchor: middle;
  fill: #4a4846;
  stroke: #fff;
  stroke-opacity: .85;
  stroke-width: 9px;
  stroke-linejoin: round;
  paint-order: stroke;
}
.labels .store { fill: #454a80; }
.labels .food { fill: #8a4a40; }
.labels .green { fill: #4d8a3a; }
.labels .station { fill: #24506e; }
.labels .start { text-anchor: start; }
.labels .road { font-size: 60px; fill: #6b6251; stroke-opacity: .5; }

.types { position: absolute; left: 48px; top: 48px; display: flex; gap: 32px; }
.type {
  width: 104px;
  height: 64px;
  padding: 0 0 3px;
  border: 0;
  border-radius: 3px;
  background: #fff;
  color: #565656;
  font: 27px "Noto Sans CJK KR", sans-serif;
  box-shadow: 0 1px 6px rgba(0, 0, 0, .25);
}
.type.active { color: #000; font-weight: 500; }
.full {
  position: absolute;
  right: 16px;
  top: 16px;
  width: 64px;
  height: 64px;
  padding: 0;
  border: 0;
  border-radius: 4px;
  background: #fff;
  box-shadow: 0 1px 6px rgba(0, 0, 0, .3);
  display: grid;
  place-items: center;
}
.full svg { width: 28px; height: 30px; }
```
